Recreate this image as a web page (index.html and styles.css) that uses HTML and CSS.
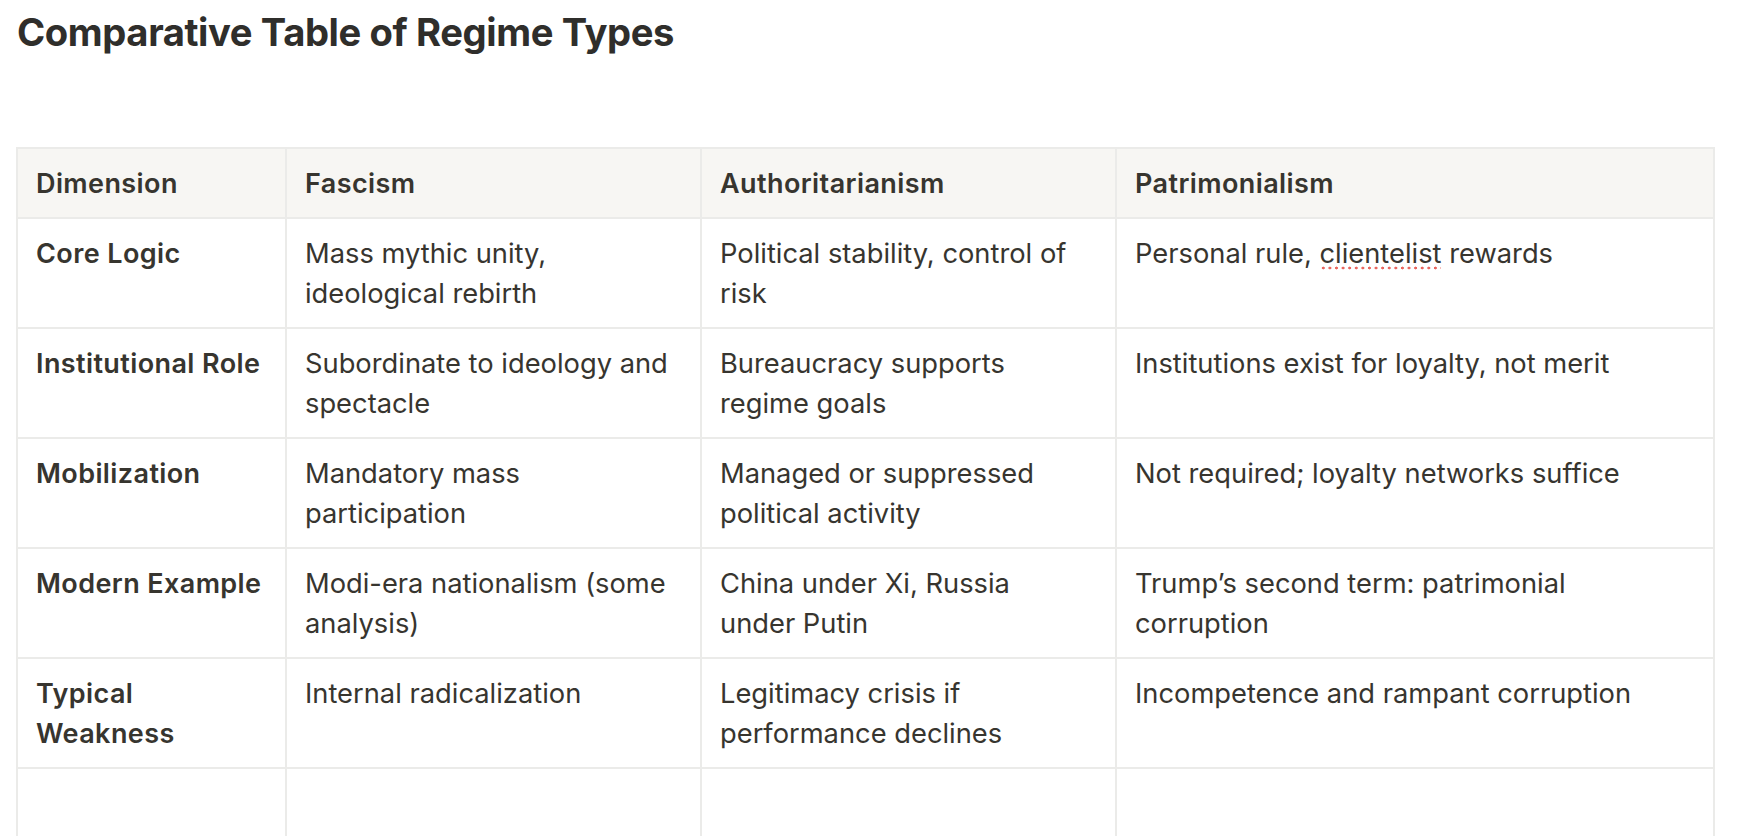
FILE: index.html
```html
<!DOCTYPE html>
<html lang="en">
<head>
<meta charset="utf-8">
<title>Comparative Table of Regime Types</title>
<link rel="stylesheet" href="styles.css">
</head>
<body>
<main class="page">
  <h1 class="title">Comparative Table of Regime Types</h1>
  <table class="regimes">
    <colgroup>
      <col class="c1"><col class="c2"><col class="c3"><col class="c4">
    </colgroup>
    <thead>
      <tr><th>Dimension</th><th>Fascism</th><th>Authoritarianism</th><th>Patrimonialism</th></tr>
    </thead>
    <tbody>
      <tr><th>Core Logic</th><td>Mass mythic unity, ideological rebirth</td><td>Political stability, control of risk</td><td>Personal rule, <span class="spell">clientelist</span> rewards</td></tr>
      <tr><th>Institutional Role</th><td>Subordinate to ideology and spectacle</td><td>Bureaucracy supports regime goals</td><td>Institutions exist for loyalty, not merit</td></tr>
      <tr><th>Mobilization</th><td>Mandatory mass participation</td><td>Managed or suppressed political activity</td><td>Not required; loyalty networks suffice</td></tr>
      <tr><th>Modern Example</th><td>Modi-era nationalism (some analysis)</td><td>China under Xi, Russia under Putin</td><td>Trump’s second term: patrimonial corruption</td></tr>
      <tr><th>Typical Weakness</th><td>Internal radicalization</td><td>Legitimacy crisis if performance declines</td><td>Incompetence and rampant corruption</td></tr>
      <tr class="empty"><th></th><td></td><td></td><td></td></tr>
    </tbody>
  </table>
</main>
</body>
</html>
```
FILE: styles.css
```css
html, body {
  margin: 0;
  padding: 0;
  background: #ffffff;
}
body {
  font-family: Inter, "Noto Sans", "Liberation Sans", sans-serif;
  color: #37352f;
  overflow: hidden;
}
.page {
  padding: 0 0 0 16px;
}
.title {
  margin: 0;
  padding: 8px 0 0 1px;
  font-size: 38.2px;
  line-height: 48px;
  font-weight: 700;
  letter-spacing: -0.4px;
  color: #2f2e2b;
}
.regimes {
  margin-top: 91px;
  border-collapse: collapse;
  table-layout: fixed;
  width: 1697px;
  font-size: 27.3px;
  line-height: 40px;
}
.c1 { width: 269px; }
.c2 { width: 415px; }
.c3 { width: 415px; }
.c4 { width: 598px; }
.regimes th,
.regimes td {
  border: 2px solid #ebebe9;
  padding: 15px 29px 13px 18px;
  text-align: left;
  vertical-align: top;
}
.regimes th {
  font-size: 27px;
  font-weight: 600;
  letter-spacing: 0.4px;
  padding-right: 17px;
}
.regimes td {
  font-weight: 400;
}
.regimes thead th {
  background: #f7f6f3;
}
.regimes tr.empty th,
.regimes tr.empty td {
  height: 40px;
}
.spell {
  background-image: radial-gradient(circle, #e9665f 1.2px, transparent 1.7px);
  background-size: 6.6px 4px;
  background-repeat: repeat-x;
  background-position: 1px 100%;
}
```
